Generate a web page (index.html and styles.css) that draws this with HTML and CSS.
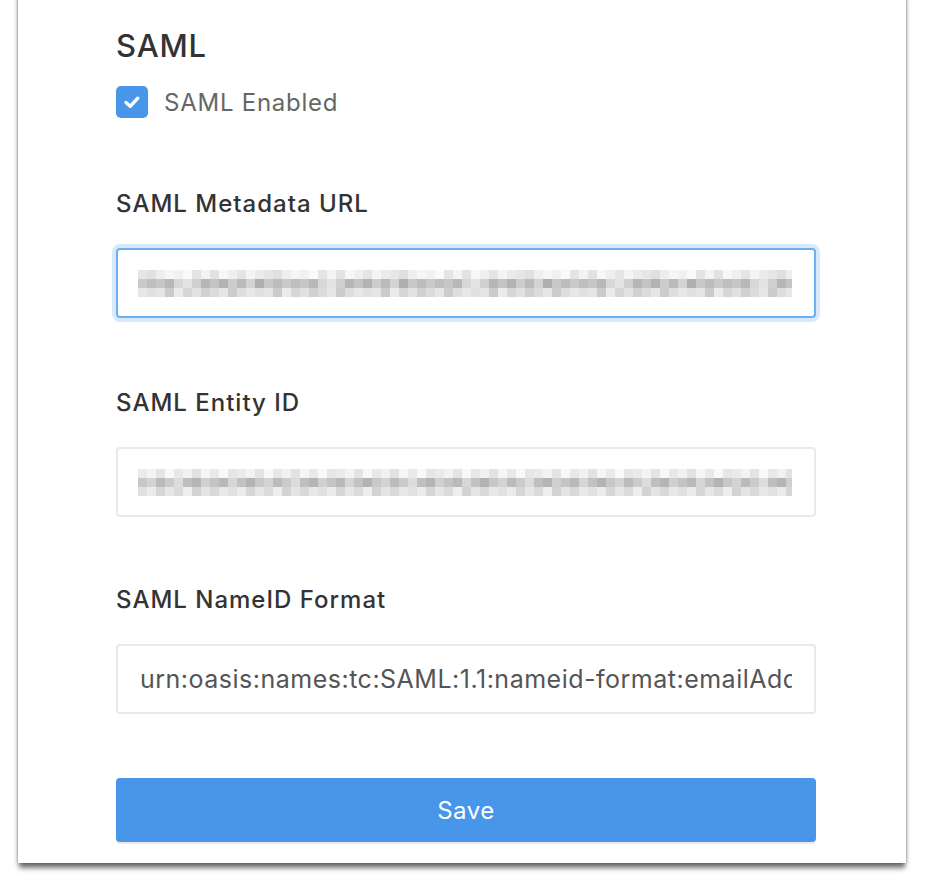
FILE: index.html
```html
<!DOCTYPE html>
<html>
<head>
<meta charset="utf-8">
<link rel="stylesheet" href="styles.css">
</head>
<body>
<div class="card">
  <h2 class="title">SAML</h2>
  <label class="check-row">
    <span class="checkbox">
      <svg width="22" height="22" viewBox="0 0 22 22"><path d="M5 11.5 L9.2 15.3 L16.8 7.2" fill="none" stroke="#fff" stroke-width="3.4" stroke-linecap="round" stroke-linejoin="round"/></svg>
    </span>
    <span class="check-label">SAML Enabled</span>
  </label>

  <div class="field">
    <div class="label">SAML Metadata URL</div>
    <div class="input focused">
      <div class="mosaic m1"><i class="r1"></i><i class="r2"></i><i class="r3"></i></div>
    </div>
  </div>

  <div class="field">
    <div class="label">SAML Entity ID</div>
    <div class="input">
      <div class="mosaic m2"><i class="r1"></i><i class="r2"></i><i class="r3"></i></div>
    </div>
  </div>

  <div class="field last">
    <div class="label">SAML NameID Format</div>
    <input class="input text" type="text" readonly value="urn:oasis:names:tc:SAML:1.1:nameid-format:emailAddress">
  </div>

  <button class="save" type="button">Save</button>
</div>
</body>
</html>
```

FILE: styles.css
```css
html, body {
  margin: 0;
  padding: 0;
  background: #ffffff;
}
body {
  font-family: Inter, "Open Sans", "Liberation Sans", sans-serif;
  overflow: hidden;
  height: 888px;
}
.card {
  box-sizing: border-box;
  margin: -10px 0 0 18px;
  width: 888px;
  height: 873px;
  background: #fff;
  padding: 38px 90px 0 98px;
  box-shadow: 0 6px 5px -1px rgba(0,0,0,0.55), 0 0 3px rgba(0,0,0,0.35);
}
.title {
  margin: 0;
  font-size: 31px;
  line-height: 36px;
  font-weight: 500;
  color: #333;
  letter-spacing: 0.8px;
}
.check-row {
  display: flex;
  align-items: center;
  gap: 16px;
  margin-top: 22px;
  height: 32px;
}
.checkbox {
  width: 32px;
  height: 32px;
  border-radius: 5px;
  background: #4796ea;
  display: flex;
  align-items: center;
  justify-content: center;
}
.check-label {
  font-size: 24px;
  letter-spacing: 0.75px;
  color: #666;
}
.field {
  margin-top: 71px;
}
.field + .field {
  margin-top: 70px;
}
.field.last {
  margin-top: 68px;
  margin-bottom: 64px;
}
.label {
  font-size: 24px;
  line-height: 30px;
  font-weight: 500;
  letter-spacing: 1px;
  color: #333;
  margin-bottom: 29px;
}
.input {
  box-sizing: border-box;
  width: 700px;
  height: 70px;
  border: 2px solid #e9e9e9;
  border-radius: 4px;
  background: #fff;
  display: flex;
  align-items: center;
  padding: 0 22px 0 20px;
  overflow: hidden;
}
.input.focused {
  border-color: #6aaef3;
  box-shadow: 0 0 0 4px #d9e9fa;
}
.input.text {
  display: block;
  font-family: inherit;
  font-size: 25px;
  letter-spacing: 0.5px;
  color: #555;
  padding-left: 22px;
  outline: none;
}
.mosaic {
  display: flex;
  flex-direction: column;
  width: 656px;
  height: 27px;
}
.mosaic i {
  display: block;
  height: 9px;
}
.m1 .r1 {
  background: repeating-linear-gradient(90deg,
    #e6e6e6 0 9px, #e0e0e0 9px 18px, #eeeeee 18px 27px, #f6f6f6 27px 36px,
    #f1f1f1 36px 45px, #fafafa 45px 54px, #e4e4e4 54px 63px, #f3f3f3 63px 72px,
    #e2e2e2 72px 81px, #f7f7f7 81px 90px, #efefef 90px 99px, #e5e5e5 99px 108px,
    #f4f4f4 108px 117px, #ebebeb 117px 126px);
}
.m1 .r2 {
  background: repeating-linear-gradient(90deg,
    #c9c9c9 0 9px, #bfbfbf 9px 18px, #c6c6c6 18px 27px, #b8b8b8 27px 36px,
    #d8d8d8 36px 45px, #e3e3e3 45px 54px, #cfcfcf 54px 63px, #b6b6b6 63px 72px,
    #c4c4c4 72px 81px, #b3b3b3 81px 90px, #cdcdcd 90px 99px, #bababa 99px 108px,
    #d3d3d3 108px 117px, #afafaf 117px 126px, #c8c8c8 126px 135px, #bcbcbc 135px 144px);
}
.m1 .r3 {
  background: repeating-linear-gradient(90deg,
    #e7e7e7 0 9px, #e0e0e0 9px 18px, #e5e5e5 18px 27px, #cacaca 27px 36px,
    #ebebeb 36px 45px, #d6d6d6 45px 54px, #e1e1e1 54px 63px, #d0d0d0 63px 72px,
    #dcdcdc 72px 81px, #e6e6e6 81px 90px, #cccccc 90px 99px, #dedede 99px 108px);
}
.m2 .r1 {
  background: repeating-linear-gradient(90deg,
    #eaeaea 0 9px, #f3f3f3 9px 18px, #e4e4e4 18px 27px, #f8f8f8 27px 36px,
    #e8e8e8 36px 45px, #f1f1f1 45px 54px, #e2e2e2 54px 63px, #f5f5f5 63px 72px,
    #e9e9e9 72px 81px, #f9f9f9 81px 90px, #e6e6e6 90px 99px);
}
.m2 .r2 {
  background: repeating-linear-gradient(90deg,
    #c8c8c8 0 9px, #d3d3d3 9px 18px, #bbbbbb 18px 27px, #cbcbcb 27px 36px,
    #dcdcdc 36px 45px, #bfbfbf 45px 54px, #b5b5b5 54px 63px, #d0d0d0 63px 72px,
    #c4c4c4 72px 81px, #b9b9b9 81px 90px, #d6d6d6 90px 99px, #c2c2c2 99px 108px,
    #b3b3b3 108px 117px);
}
.m2 .r3 {
  background: repeating-linear-gradient(90deg,
    #e1e1e1 0 9px, #ebebeb 9px 18px, #d6d6d6 18px 27px, #e6e6e6 27px 36px,
    #dbdbdb 36px 45px, #eeeeee 45px 54px, #d3d3d3 54px 63px, #e4e4e4 63px 72px,
    #d9d9d9 72px 81px, #e8e8e8 81px 90px);
}
.save {
  display: block;
  width: 700px;
  height: 64px;
  border: 0;
  border-radius: 4px;
  background: #4796e9;
  color: #fff;
  font-family: inherit;
  font-size: 24px;
  letter-spacing: 0.5px;
  box-shadow: 0 2px 0 #ececec;
  padding: 0;
}
```
